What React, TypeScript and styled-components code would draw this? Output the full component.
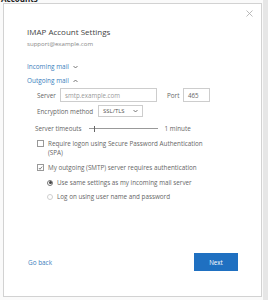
import { createGlobalStyle, styled } from "styled-components"

const GlobalStyle = createGlobalStyle`
    html, body {
        margin: 0;
        padding: 0;
        background: #ececec;
        font-family: "Open Sans", "Noto Sans", sans-serif;
        color: #555;
    }
`

const Page = styled.div`
    width: 268px;
    height: 300px;
    overflow: hidden;
    background: linear-gradient(to right, #fafafa 0, #fafafa 263px, #e6e6e6 263px);
`

const PageTitle = styled.div`
    height: 3px;
    overflow: hidden;
    font: bold 8px/1 "Open Sans", sans-serif;
    color: #222;
    padding-left: 1px;
    > span {
        display: block;
        margin-top: -5px;
    }
`

const Dialog = styled.div`
    margin-left: 3px;
    width: 259px;
    height: 294px;
    background: #fff;
    border: 1px solid #d2d2d2;
    display: flex;
    flex-direction: column;
    padding: 0 23px 25px 23px;
    box-sizing: border-box;
`

const TopBar = styled.div`
    height: 17px;
    display: flex;
    justify-content: flex-end;
    align-items: center;
    margin-right: -15px;
    padding-top: 1px;
`

const Title = styled.h1`
    margin: 4px 0 0;
    font-size: 8px;
    line-height: 12px;
    font-weight: 400;
    color: #444;
`

const Email = styled.div`
    font-size: 6.1px;
    line-height: 9px;
    margin-top: 1px;
    color: #888;
`

const Section = styled.div<{ $top: number }>`
    margin-top: ${p => p.$top}px;
    display: flex;
    align-items: center;
    gap: 4px;
    font-size: 6.4px;
    line-height: 10px;
    color: #3a80bd;
`

const Form = styled.div`
    padding-left: 10px;
    display: flex;
    flex-direction: column;
    font-size: 6.3px;
    color: #666;
`

const Row = styled.div<{ $top: number }>`
    margin-top: ${p => p.$top}px;
    display: flex;
    align-items: center;
    line-height: 9px;
`

const Label = styled.span<{ $w: number }>`
    width: ${p => p.$w}px;
    flex: none;
`

const Input = styled.div<{ $w: number; $muted?: boolean }>`
    width: ${p => p.$w}px;
    height: 14px;
    box-sizing: border-box;
    border: 1px solid #cdcdcd;
    display: flex;
    align-items: center;
    padding-left: 4px;
    font-size: 6.2px;
    color: ${p => (p.$muted ? "#999" : "#666")};
`

const Select = styled.div`
    width: 45px;
    height: 12px;
    box-sizing: border-box;
    border: 1px solid #cdcdcd;
    display: flex;
    align-items: center;
    justify-content: space-between;
    padding: 0 4px;
    font-size: 6px;
    color: #555;
`

const Slider = styled.div`
    width: 69px;
    height: 8px;
    margin: 0 7px 0 7px;
    display: flex;
    align-items: center;
    position: relative;
    &::before {
        content: "";
        flex: 1;
        height: 1px;
        background: #999;
    }
`

const Thumb = styled.span`
    position: absolute;
    left: 5px;
    top: 1px;
    width: 1.5px;
    height: 6px;
    background: #666;
`

const Check = styled.span`
    width: 7px;
    height: 7px;
    flex: none;
    box-sizing: border-box;
    border: 1px solid #999;
    margin-right: 4px;
    display: flex;
    align-items: center;
    justify-content: center;
    align-self: flex-start;
    margin-top: 1px;
`

const Radio = styled.span<{ $on?: boolean }>`
    width: 6px;
    height: 6px;
    flex: none;
    box-sizing: border-box;
    border-radius: 50%;
    border: 1px solid ${p => (p.$on ? "#777" : "#cfcfcf")};
    margin-right: 4px;
    display: flex;
    align-items: center;
    justify-content: center;
    &::after {
        content: "";
        width: 3px;
        height: 3px;
        border-radius: 50%;
        background: ${p => (p.$on ? "#444" : "transparent")};
    }
`

const Indent = styled.div`
    padding-left: 10px;
    display: flex;
    flex-direction: column;
`

const Footer = styled.div`
    margin-top: auto;
    display: flex;
    justify-content: space-between;
    align-items: center;
`

const LinkText = styled.span`
    font-size: 6.4px;
    color: #3a80bd;
    margin-left: 1px;
`

const NextButton = styled.button`
    width: 44px;
    height: 18px;
    border: none;
    background: #1f70c1;
    color: #fff;
    font-family: inherit;
    font-size: 6.2px;
    padding: 0;
`

const Chevron = ({ up }: { up?: boolean }) => (
    <svg width="5" height="4" viewBox="0 0 5 4">
        <path d={up ? "M0.5 3L2.5 1L4.5 3" : "M0.5 1L2.5 3L4.5 1"} fill="none" stroke="#555" strokeWidth="0.8" />
    </svg>
)

export default function App() {
    return (
        <Page>
            <GlobalStyle />
            <PageTitle><span>Accounts</span></PageTitle>
            <Dialog>
                <TopBar>
                    <svg width="7" height="7" viewBox="0 0 7 7">
                        <path d="M0.5 0.5L6.5 6.5M6.5 0.5L0.5 6.5" stroke="#aaa" strokeWidth="0.8" />
                    </svg>
                </TopBar>
                <Title>IMAP Account Settings</Title>
                <Email>support@example.com</Email>
                <Section $top={14}>Incoming mail <Chevron /></Section>
                <Section $top={4}>Outgoing mail <Chevron up /></Section>
                <Form>
                    <Row $top={2}>
                        <Label $w={23}>Server</Label>
                        <Input $w={97} $muted>smtp.example.com</Input>
                        <Label $w={16} style={{ marginLeft: 10 }}>Port</Label>
                        <Input $w={27}>465</Input>
                    </Row>
                    <Row $top={3}>
                        <Label $w={61}>Encryption method</Label>
                        <Select>SSL/TLS <Chevron /></Select>
                    </Row>
                    <Row $top={7}>
                        <span style={{ marginLeft: -2 }}>Server timeouts</span>
                        <Slider><Thumb /></Slider>
                        <span>1 minute</span>
                    </Row>
                    <Row $top={6} style={{ alignItems: "flex-start" }}>
                        <Check />
                        <span>Require logon using Secure Password Authentication<br />(SPA)</span>
                    </Row>
                    <Row $top={6}>
                        <Check>
                            <svg width="6" height="6" viewBox="0 0 6 6">
                                <path d="M1 3L2.4 4.5L5 1.3" fill="none" stroke="#444" strokeWidth="0.8" />
                            </svg>
                        </Check>
                        <span>My outgoing (SMTP) server requires authentication</span>
                    </Row>
                    <Indent>
                        <Row $top={6}>
                            <Radio $on />
                            <span>Use same settings as my incoming mail server</span>
                        </Row>
                        <Row $top={5}>
                            <Radio />
                            <span>Log on using user name and password</span>
                        </Row>
                    </Indent>
                </Form>
                <Footer>
                    <LinkText>Go back</LinkText>
                    <NextButton>Next</NextButton>
                </Footer>
            </Dialog>
        </Page>
    )
}
